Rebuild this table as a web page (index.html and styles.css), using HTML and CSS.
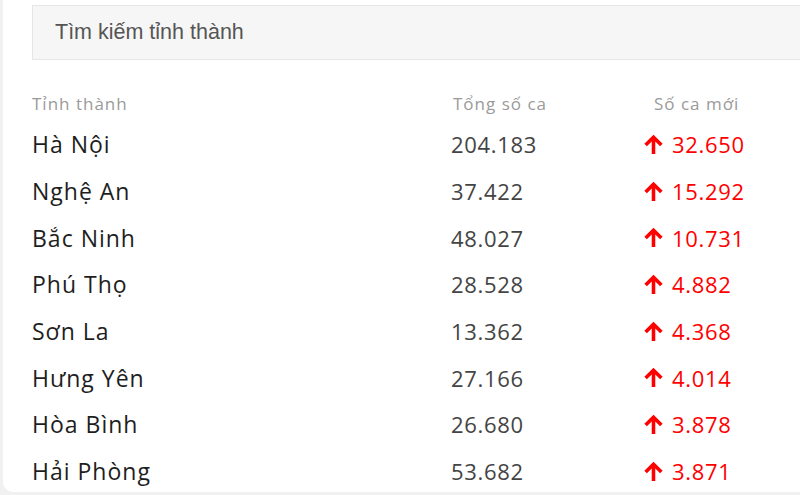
FILE: index.html
```html
<!DOCTYPE html>
<html lang="vi">
<head>
<meta charset="utf-8">
<link rel="stylesheet" href="styles.css">
</head>
<body>
<div class="card">
  <div class="search">Tìm kiếm tỉnh thành</div>
  <div class="table">
    <div class="row head">
      <span>Tỉnh thành</span><span class="c2">Tổng số ca</span><span class="c3">Số ca mới</span>
    </div>
    <div class="row"><span class="name">Hà Nội</span><span class="total">204.183</span><span class="new"><svg class="up" viewBox="0 0 20 20"><path d="M10 19V3M2.5 10.5L10 3l7.5 7.5"/></svg>32.650</span></div>
    <div class="row"><span class="name">Nghệ An</span><span class="total">37.422</span><span class="new"><svg class="up" viewBox="0 0 20 20"><path d="M10 19V3M2.5 10.5L10 3l7.5 7.5"/></svg>15.292</span></div>
    <div class="row"><span class="name">Bắc Ninh</span><span class="total">48.027</span><span class="new"><svg class="up" viewBox="0 0 20 20"><path d="M10 19V3M2.5 10.5L10 3l7.5 7.5"/></svg>10.731</span></div>
    <div class="row"><span class="name">Phú Thọ</span><span class="total">28.528</span><span class="new"><svg class="up" viewBox="0 0 20 20"><path d="M10 19V3M2.5 10.5L10 3l7.5 7.5"/></svg>4.882</span></div>
    <div class="row"><span class="name">Sơn La</span><span class="total">13.362</span><span class="new"><svg class="up" viewBox="0 0 20 20"><path d="M10 19V3M2.5 10.5L10 3l7.5 7.5"/></svg>4.368</span></div>
    <div class="row"><span class="name">Hưng Yên</span><span class="total">27.166</span><span class="new"><svg class="up" viewBox="0 0 20 20"><path d="M10 19V3M2.5 10.5L10 3l7.5 7.5"/></svg>4.014</span></div>
    <div class="row"><span class="name">Hòa Bình</span><span class="total">26.680</span><span class="new"><svg class="up" viewBox="0 0 20 20"><path d="M10 19V3M2.5 10.5L10 3l7.5 7.5"/></svg>3.878</span></div>
    <div class="row"><span class="name">Hải Phòng</span><span class="total">53.682</span><span class="new"><svg class="up" viewBox="0 0 20 20"><path d="M10 19V3M2.5 10.5L10 3l7.5 7.5"/></svg>3.871</span></div>
  </div>
</div>
</body>
</html>
```
FILE: styles.css
```css
html, body {
  margin: 0;
  padding: 0;
  background: #f1f1f1;
  height: 495px;
  overflow: hidden;
}
body {
  padding-left: 3px;
  font-family: "Open Sans", "Noto Sans", sans-serif;
}
.card {
  background: #fff;
  width: 820px;
  height: 492px;
  border-bottom-left-radius: 10px;
  padding: 5px 0 0 29px;
  box-sizing: border-box;
}
.search {
  height: 55px;
  box-sizing: border-box;
  background: #f6f6f6;
  border: 1px solid #e6e6e6;
  border-right: none;
  display: flex;
  align-items: center;
  padding-left: 22px;
  font-family: "Liberation Sans", Arial, sans-serif;
  font-size: 21.5px;
  color: #555;
}
.table {
  margin-top: 26px;
}
.row {
  display: grid;
  grid-template-columns: 419px 194px 1fr;
  height: 46.7px;
  align-items: center;
  font-size: 22px;
  letter-spacing: 0.7px;
  color: #222;
}
.row .name {
  font-size: 23px;
  letter-spacing: 1px;
  color: #1e1e1e;
}
.row.head {
  height: 35px;
  align-items: center;
  font-size: 17px;
  letter-spacing: 1px;
  color: #9a9a9a;
}
.head .c2 { padding-left: 2px; }
.head .c3 { padding-left: 9px; }
.total { color: #444; }
.new {
  color: #f00;
  display: flex;
  align-items: center;
}
.up {
  width: 21px;
  height: 21px;
  margin-left: -2px;
  margin-right: 8px;
  fill: none;
  stroke: #f00;
  stroke-width: 3.4;
  stroke-linecap: butt;
  stroke-linejoin: miter;
}
```
